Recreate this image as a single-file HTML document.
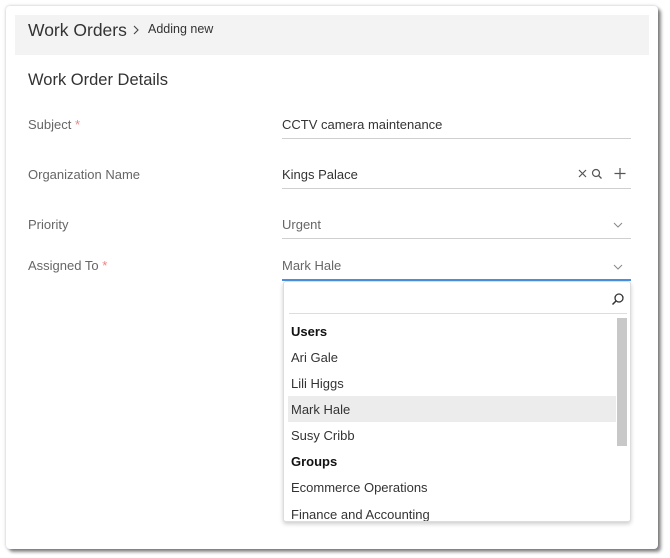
<!DOCTYPE html>
<html><head><meta charset="utf-8"><style>
*{margin:0;padding:0;box-sizing:border-box}
body{width:670px;height:558px;background:#fff;font-family:"Liberation Sans",sans-serif;position:relative;overflow:hidden}
.win{position:absolute;left:6px;top:6px;width:652px;height:543px;background:#fff;border-radius:4px;box-shadow:0 0 3px rgba(0,0,0,.25),3px 3px 3px rgba(0,0,0,.45)}
.hdr{position:absolute;left:15px;top:15px;width:634px;height:40px;background:#f3f3f3}
.a{position:absolute;white-space:nowrap}
.lbl{color:#666;font-size:13px}
.val{color:#333;font-size:13px}
.line{position:absolute;height:1px;background:#cfcfcf}
.star{color:#f57f7f}
.dd{position:absolute;left:283px;top:281px;width:348px;height:241px;background:#fff;border:1px solid #ddd;border-radius:3px;box-shadow:0 2px 4px rgba(0,0,0,.2);overflow:hidden}
.it{position:absolute;left:7px;font-size:13px;color:#333}
.grp{position:absolute;left:7px;font-size:13px;color:#111;font-weight:bold}
</style></head><body>
<div class="win"></div>
<div class="hdr"></div>
<div class="a" style="left:28px;top:20px;font-size:17.5px;color:#333">Work Orders</div>
<svg class="a" style="left:132px;top:25px" width="8" height="10"><path d="M2 1l4 4-4 4" stroke="#444" stroke-width="1.1" fill="none"/></svg>
<div class="a" style="left:148px;top:22px;font-size:12.5px;color:#333">Adding new</div>
<div class="a" style="left:28px;top:71px;font-size:16.5px;color:#333">Work Order Details</div>

<div class="a lbl" style="left:28px;top:117px">Subject <span class="star">*</span></div>
<div class="a val" style="left:282px;top:117px">CCTV camera maintenance</div>
<div class="line" style="left:282px;top:138px;width:349px"></div>

<div class="a lbl" style="left:28px;top:167px">Organization Name</div>
<div class="a val" style="left:282px;top:167px">Kings Palace</div>
<svg class="a" style="left:577px;top:167px" width="50" height="14" viewBox="0 0 50 14"><path d="M2 3l7 7M9 3l-7 7" stroke="#555" stroke-width="1.2" fill="none"/><circle cx="19" cy="6" r="3.5" stroke="#555" stroke-width="1.2" fill="none"/><path d="M21.5 8.5l3 3" stroke="#555" stroke-width="1.3"/><path d="M43 1v11M37.5 6.5h11" stroke="#555" stroke-width="1.2"/></svg>
<div class="line" style="left:282px;top:188px;width:349px"></div>

<div class="a lbl" style="left:28px;top:217px">Priority</div>
<div class="a lbl" style="left:282px;top:217px">Urgent</div>
<svg class="a" style="left:613px;top:222px" width="10" height="6"><path d="M1 1l4 4 4-4" stroke="#888" fill="none"/></svg>
<div class="line" style="left:282px;top:238px;width:349px"></div>

<div class="a lbl" style="left:28px;top:258px">Assigned To <span class="star">*</span></div>
<div class="a lbl" style="left:282px;top:258px">Mark Hale</div>
<svg class="a" style="left:613px;top:264px" width="10" height="6"><path d="M1 1l4 4 4-4" stroke="#888" fill="none"/></svg>
<div class="line" style="left:282px;top:279px;width:349px;height:2px;background:#4a90e2"></div>

<div class="dd">
 <svg style="position:absolute;left:327px;top:10px" width="14" height="14"><circle cx="8" cy="6" r="4" stroke="#333" stroke-width="1.3" fill="none"/><path d="M5 9l-3.5 3.5" stroke="#333" stroke-width="1.5"/></svg>
 <div style="position:absolute;left:5px;top:31px;width:338px;height:1px;background:#ddd"></div>
 <div style="position:absolute;left:333px;top:36px;width:10px;height:128px;background:#c8c8c8"></div>
 <div style="position:absolute;left:4px;top:114px;width:328px;height:26px;background:#ececec"></div>
 <div class="grp" style="top:42px">Users</div>
 <div class="it" style="top:68px">Ari Gale</div>
 <div class="it" style="top:94px">Lili Higgs</div>
 <div class="it" style="top:120px">Mark Hale</div>
 <div class="it" style="top:146px">Susy Cribb</div>
 <div class="grp" style="top:172px">Groups</div>
 <div class="it" style="top:198px">Ecommerce Operations</div>
 <div class="it" style="top:225px">Finance and Accounting</div>
</div>
</body></html>
